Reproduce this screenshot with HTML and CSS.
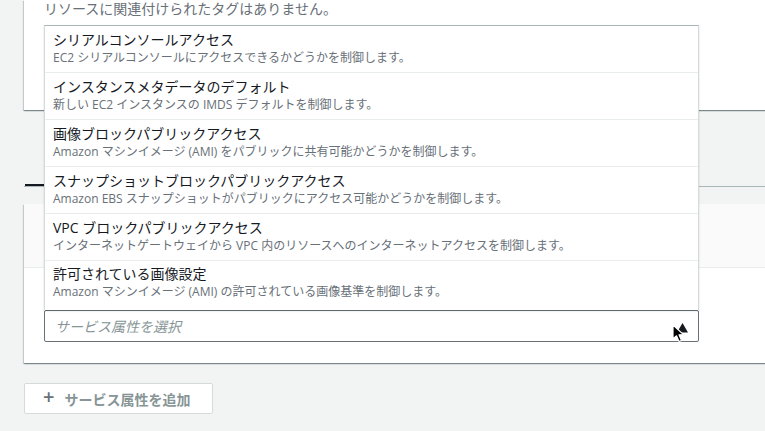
FILE: index.html
```html
<!DOCTYPE html>
<html lang="ja">
<head>
<meta charset="utf-8">
<link rel="stylesheet" href="styles.css">
</head>
<body>
<div class="page">
  <section class="card card-tags">
    <p class="empty">リソースに関連付けられたタグはありません。</p>
  </section>

  <div class="tabs">
    <div class="tab tab-active"></div>
  </div>

  <section class="card card-attrs">
    <div class="card-header"></div>
    <div class="card-body">
      <div class="select-wrap">
        <ul class="menu">
          <li class="option">
            <div class="opt-title">シリアルコンソールアクセス</div>
            <div class="opt-desc">EC2 シリアルコンソールにアクセスできるかどうかを制御します。</div>
          </li>
          <li class="option">
            <div class="opt-title">インスタンスメタデータのデフォルト</div>
            <div class="opt-desc">新しい EC2 インスタンスの IMDS デフォルトを制御します。</div>
          </li>
          <li class="option">
            <div class="opt-title">画像ブロックパブリックアクセス</div>
            <div class="opt-desc">Amazon マシンイメージ (AMI) をパブリックに共有可能かどうかを制御します。</div>
          </li>
          <li class="option">
            <div class="opt-title">スナップショットブロックパブリックアクセス</div>
            <div class="opt-desc">Amazon EBS スナップショットがパブリックにアクセス可能かどうかを制御します。</div>
          </li>
          <li class="option">
            <div class="opt-title">VPC ブロックパブリックアクセス</div>
            <div class="opt-desc">インターネットゲートウェイから VPC 内のリソースへのインターネットアクセスを制御します。</div>
          </li>
          <li class="option option-last">
            <div class="opt-title">許可されている画像設定</div>
            <div class="opt-desc">Amazon マシンイメージ (AMI) の許可されている画像基準を制御します。</div>
          </li>
        </ul>
        <div class="select">
          <span class="placeholder">サービス属性を選択</span>
          <svg class="caret" width="22" height="24" viewBox="0 0 22 24">
            <path d="M6 12.5 L11.5 3 L17 12.5 Z" fill="#16191f"/>
            <path d="M2 5 L2 19 L5.5 15.8 L8 21.5 L10.5 20.4 L8 14.8 L12.5 14.6 Z" fill="#000" stroke="#fff" stroke-width="1.2" stroke-linejoin="round"/>
          </svg>
        </div>
      </div>
    </div>
  </section>

  <button class="add-btn"><span class="plus">+</span><span>サービス属性を追加</span></button>
</div>
</body>
</html>
```

FILE: styles.css
```css
html, body {
  margin: 0;
  padding: 0;
  overflow: hidden;
  background: #f2f3f3;
}

body {
  font-family: "Open Sans", "Noto Sans CJK JP", sans-serif;
  color: #16191f;
  width: 765px;
  height: 431px;
}

.page {
  padding-left: 24px;
  width: 800px;
}

.card {
  background: #fff;
  box-shadow: 0 1px 1px 0 rgba(0, 28, 36, 0.3), 1px 1px 1px 0 rgba(0, 28, 36, 0.15), -1px 1px 1px 0 rgba(0, 28, 36, 0.15);
}

.card-tags {
  height: 110px;
  padding: 1px 20px 0;
  box-sizing: border-box;
}

.empty {
  margin: 0;
  font-size: 14px;
  line-height: 16px;
  color: #687078;
}

.tabs {
  margin-top: 74px;
  border-bottom: 1px solid #aab7b8;
  display: flex;
}

.tab {
  width: 120px;
  height: 0;
}

.tab-active {
  margin-left: 1px;
  border-bottom: 2px solid #16191f;
}

.card-attrs {
  margin-top: 17px;
}

.card-header {
  height: 63px;
  background: #fafafa;
  border-bottom: 1px solid #eaeded;
}

.card-body {
  padding: 42px 20px 21px;
}

.select-wrap {
  position: relative;
  width: 655px;
}

.menu {
  position: absolute;
  left: 0;
  bottom: 100%;
  width: 655px;
  box-sizing: border-box;
  margin: 0;
  padding: 0;
  list-style: none;
  background: #fff;
  border: 1px solid #d5dbdb;
  border-top-color: #aab7b8;
  border-bottom: none;
  box-shadow: 0 1px 2px rgba(0, 28, 36, 0.15);
  z-index: 2;
}

.option {
  height: 47px;
  padding: 4px 8px 0;
  box-sizing: border-box;
  border-bottom: 1px solid #eaeded;
}

.option-last {
  border-bottom: none;
  height: 49px;
  padding-top: 3px;
}

.opt-title {
  font-size: 14px;
  line-height: 20px;
  color: #16191f;
  white-space: nowrap;
}

.opt-desc {
  font-size: 12px;
  line-height: 16px;
  color: #687078;
  white-space: nowrap;
}

.select {
  position: relative;
  height: 32px;
  box-sizing: border-box;
  border: 1px solid #687078;
  border-radius: 2px;
  background: #fff;
  padding: 0 10px;
  display: flex;
  align-items: center;
}

.placeholder {
  font-size: 14px;
  font-style: italic;
  color: #879596;
}

.caret {
  position: absolute;
  right: 5px;
  top: 9px;
}

.add-btn {
  display: flex;
  align-items: center;
  margin-top: 20px;
  width: 189px;
  height: 31px;
  box-sizing: border-box;
  background: #fff;
  border: 1px solid #d5dbdb;
  border-radius: 2px;
  padding: 0 0 0 18px;
  font-family: "Open Sans", "Noto Sans CJK JP", sans-serif;
  font-size: 14px;
  font-weight: 700;
  color: #879596;
  gap: 10px;
}

.plus {
  font-size: 20px;
  font-weight: 600;
  line-height: 1;
  margin-top: -3px;
  color: #687078;
}
```
